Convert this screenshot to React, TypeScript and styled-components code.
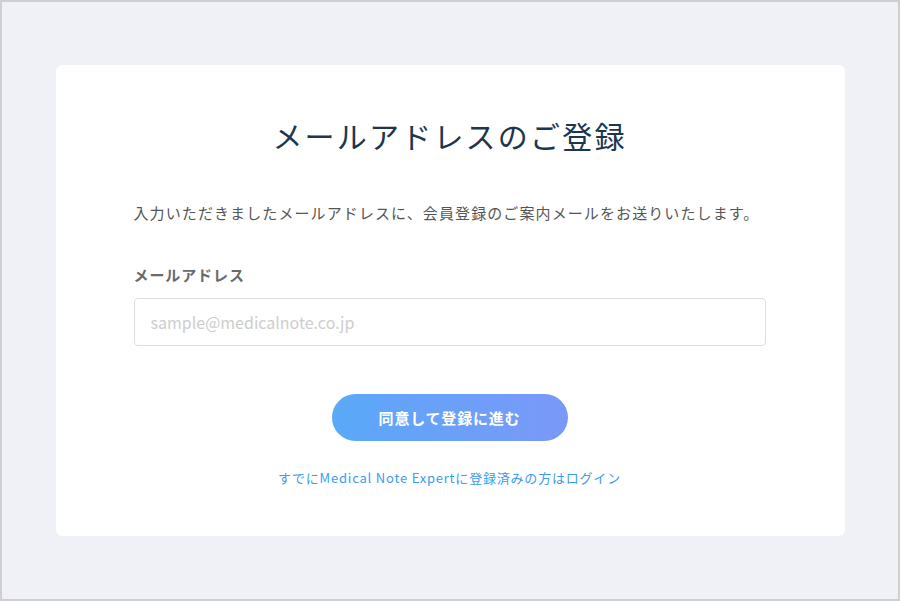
import styled, { createGlobalStyle } from "styled-components";

const GlobalStyle = createGlobalStyle`
  html, body {
    margin: 0;
    padding: 0;
  }
  body {
    font-family: "Noto Sans CJK JP", "Noto Sans", sans-serif;
    -webkit-font-smoothing: antialiased;
  }
  * {
    box-sizing: border-box;
  }
`;

const Page = styled.div`
  width: 900px;
  height: 601px;
  border: 2px solid #cfcfd1;
  background: #f0f1f6;
  display: flex;
  align-items: center;
  justify-content: center;
`;

const Card = styled.section`
  width: 789px;
  background: #fff;
  border-radius: 6px;
  padding: 48px 79px 48px 78px;
  display: flex;
  flex-direction: column;
`;

const Title = styled.h1`
  margin: 0;
  font-size: 30px;
  line-height: 45px;
  font-weight: 400;
  color: #1c3650;
  text-align: center;
  letter-spacing: 2.2px;
`;

const Lead = styled.p`
  margin: 43px 0 0;
  font-size: 15px;
  line-height: 24px;
  color: #555;
  letter-spacing: 1.1px;
`;

const Label = styled.label`
  margin-top: 38px;
  font-size: 15px;
  line-height: 24px;
  font-weight: 700;
  color: #6a6a6a;
  letter-spacing: 0.9px;
`;

const Input = styled.input`
  margin-top: 11px;
  width: 100%;
  height: 48px;
  border: 1px solid #dedede;
  border-radius: 4px;
  padding: 0 16px;
  font-family: inherit;
  font-size: 16px;
  color: #333;
  outline: none;

  &::placeholder {
    color: #cdcdcd;
  }
`;

const Submit = styled.button`
  align-self: center;
  margin-top: 48px;
  width: 236px;
  height: 47px;
  border: none;
  border-radius: 24px;
  background: linear-gradient(90deg, #5aa9f8 0%, #7b98f8 100%);
  color: #fff;
  font-family: inherit;
  font-size: 15px;
  font-weight: 700;
  letter-spacing: 0.8px;
  cursor: pointer;
`;

const LoginLink = styled.a`
  align-self: center;
  margin-top: 27px;
  font-size: 13px;
  line-height: 20px;
  color: #3a9bf0;
  text-decoration: none;
  letter-spacing: 0.8px;
`;

export default function App() {
  return (
    <>
      <GlobalStyle />
      <Page>
        <Card>
          <Title>メールアドレスのご登録</Title>
          <Lead>
            入力いただきましたメールアドレスに、会員登録のご案内メールをお送りいたします。
          </Lead>
          <Label htmlFor="email">メールアドレス</Label>
          <Input id="email" type="email" placeholder="sample@medicalnote.co.jp" />
          <Submit type="button">同意して登録に進む</Submit>
          <LoginLink href="#">
            すでにMedical Note Expertに登録済みの方はログイン
          </LoginLink>
        </Card>
      </Page>
    </>
  );
}
